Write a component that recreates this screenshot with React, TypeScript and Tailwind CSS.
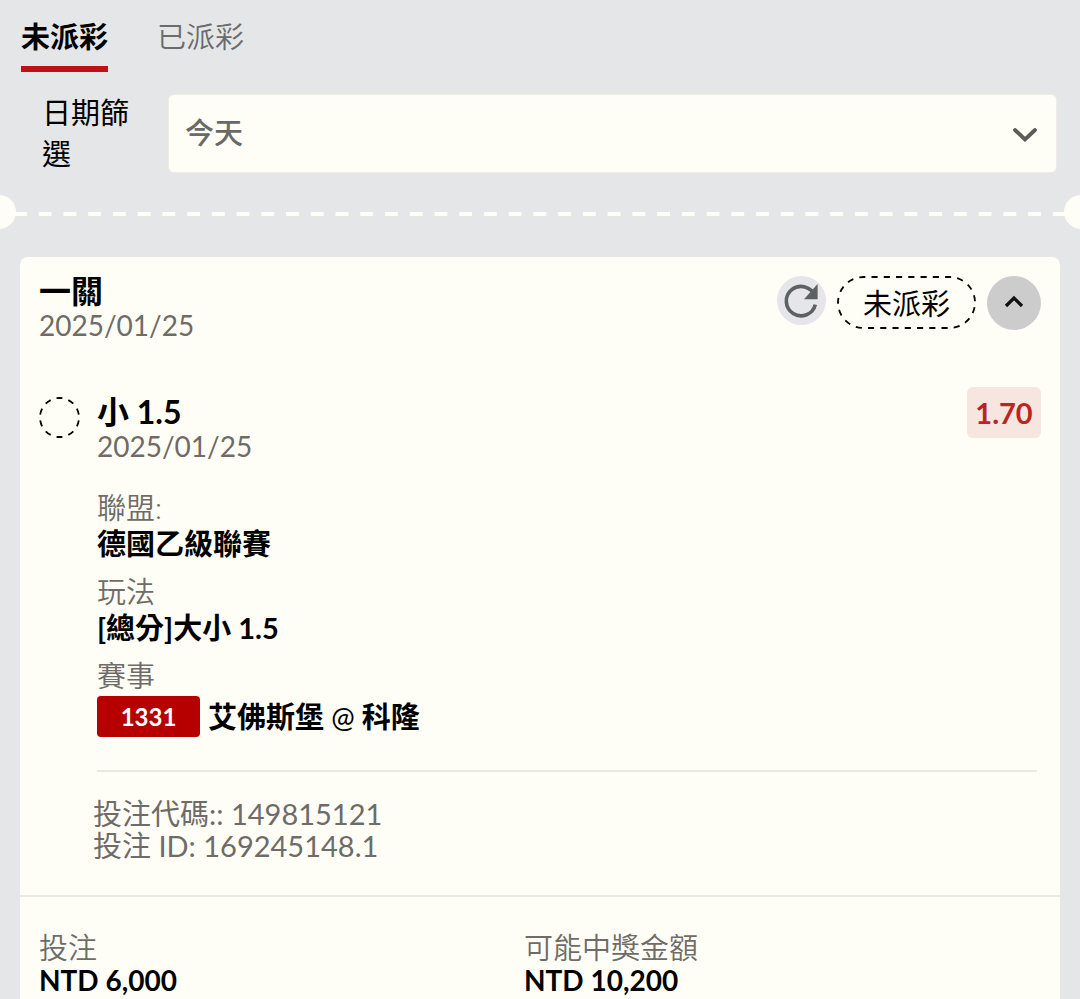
import { useState } from "react";
import clsx from "clsx";

const tabs = ["未派彩", "已派彩"];

const details = [
  { label: "聯盟:", value: "德國乙級聯賽" },
  { label: "玩法", value: "[總分]大小 1.5" },
];

const totals = [
  { label: "投注", value: "NTD 6,000" },
  { label: "可能中獎金額", value: "NTD 10,200" },
];

const ReloadIcon = () => (
  <svg viewBox="0 0 49 49" className="h-full w-full" aria-hidden="true">
    <path
      d="M38.3 28.6A14.7 14.7 0 1 1 37.8 20"
      fill="none"
      stroke="#5f6063"
      strokeWidth="3.6"
    />
    <path d="M40.6 8V23.2H27Z" fill="#5f6063" />
  </svg>
);

const PendingCircle = () => (
  <svg
    viewBox="0 0 41 41"
    className="mt-2.5 size-[41px] shrink-0"
    aria-hidden="true"
  >
    <circle
      cx="20.5"
      cy="20.5"
      r="19.5"
      pathLength="20"
      fill="none"
      stroke="#000"
      strokeWidth="1.8"
      strokeDasharray="1 1"
      strokeDashoffset="-0.5"
    />
  </svg>
);

const StatusPill = ({ children }: { children: string }) => (
  <span className="relative flex h-[53px] w-[139px] items-center justify-center pt-0.5 text-black">
    <svg
      viewBox="0 0 139 53"
      className="absolute inset-0 h-full w-full"
      aria-hidden="true"
    >
      <rect
        x="1"
        y="1"
        width="137"
        height="51"
        rx="25.5"
        pathLength="54"
        fill="none"
        stroke="#000"
        strokeWidth="1.8"
        strokeDasharray="1 1"
        strokeDashoffset="0.7"
      />
    </svg>
    {children}
  </span>
);

const Tabs = () => {
  const [active, setActive] = useState(0);
  return (
    <nav className="flex gap-[49px] px-[21px]">
      {tabs.map((tab, index) => (
        <button
          key={tab}
          type="button"
          onClick={() => setActive(index)}
          className={clsx(
            "h-[72px] border-b-6 pt-2",
            index === active
              ? "border-[#c01014] font-bold text-black"
              : "border-transparent font-[350] text-[#6b6b6b]"
          )}
        >
          {tab}
        </button>
      ))}
    </nav>
  );
};

const DateFilter = () => (
  <div className="mt-5 flex items-center gap-[38px] pl-[42px] pr-[23px]">
    <label htmlFor="date" className="w-22 shrink-0 leading-[41px] text-black">
      日期篩選
    </label>
    <div className="relative grow">
      <select
        id="date"
        className="block h-[79px] w-full appearance-none rounded-md border border-[#f0ede5] bg-[#fffef6] px-4 font-medium text-[#6b6965]"
      >
        <option>今天</option>
        <option>昨天</option>
      </select>
      <svg
        viewBox="0 0 24 14"
        className="pointer-events-none absolute right-5 top-[34px] h-3.5 w-6"
        aria-hidden="true"
      >
        <path
          d="M2 2L12 11.5L22 2"
          fill="none"
          stroke="#5c5c59"
          strokeWidth="3.8"
          strokeLinecap="round"
        />
      </svg>
    </div>
  </div>
);

const TicketDivider = () => (
  <div className="relative mt-[21px] flex h-[34px] items-center overflow-hidden pl-3.5 pr-0.5 pt-1">
    <div className="h-1 grow bg-[linear-gradient(90deg,#fffef6_50%,transparent_50%)] bg-[length:25px_4px] [background-repeat:round]" />
    <span className="absolute -left-[18px] top-0 size-[34px] rounded-full bg-[#fffef6]" />
    <span className="absolute -right-[18px] top-0 size-[34px] rounded-full bg-[#fffef6]" />
  </div>
);

const BetCard = () => (
  <article className="mx-5 mt-7 grow rounded-t-lg bg-[#fffef6] pt-4">
    <header className="flex items-start justify-between px-[19px]">
      <div>
        <h2 className="text-[32px] leading-9 font-bold text-black">一關</h2>
        <p className="text-[28px] leading-8">2025/01/25</p>
      </div>
      <div className="mt-[3px] flex items-start gap-[11px]">
        <button
          type="button"
          aria-label="重新整理"
          className="size-[49px] rounded-full bg-[#e5e5ea]"
        >
          <ReloadIcon />
        </button>
        <StatusPill>未派彩</StatusPill>
        <button
          type="button"
          aria-label="收合"
          className="size-[54px] rounded-full bg-[#cccccd]"
        >
          <svg viewBox="0 0 54 54" className="h-full w-full" aria-hidden="true">
            <path
              d="M19 30L27 22L35 30"
              fill="none"
              stroke="#111"
              strokeWidth="3.2"
            />
          </svg>
        </button>
      </div>
    </header>

    <section className="mt-[46px] flex items-start px-[19px]">
      <PendingCircle />
      <div className="ml-[17px] grow pt-[7px]">
        <h3 className="text-[32px] leading-9 font-bold text-black">小 1.5</h3>
        <p className="text-[28px] leading-8">2025/01/25</p>
      </div>
      <span className="flex h-[51px] w-[74px] items-center justify-center rounded-md bg-[#f7e5df] font-bold text-[#b9261f]">
        1.70
      </span>
    </section>

    <div className="mt-7 pl-[77px] pr-[23px]">
      <dl className="flex flex-col gap-3 leading-9">
        {details.map(({ label, value }) => (
          <div key={label}>
            <dt className="font-[350]">{label}</dt>
            <dd className="font-bold text-black">{value}</dd>
          </div>
        ))}
        <div>
          <dt className="font-[350]">賽事</dt>
          <dd className="mt-0.5 flex items-center gap-2 font-bold text-black">
            <span className="flex h-[41px] w-[103px] items-center justify-center rounded-sm bg-[#b60000] text-2xl text-white">
              1331
            </span>
            <span>
              艾佛斯堡
              <span className="text-[28px] font-normal">{" @ "}</span>
              科隆
            </span>
          </dd>
        </div>
      </dl>
      <hr className="mt-[33px] border-t-2 border-[#ebe8e3]" />
    </div>

    <div className="mt-[26px] px-[73px] pb-[33px] leading-8">
      <p>投注代碼:: 149815121</p>
      <p>投注 ID: 169245148.1</p>
    </div>

    <dl className="grid grid-cols-2 border-t-2 border-[#ebe8e3] pl-[19px] pr-[51px] pt-[35px] leading-8">
      {totals.map(({ label, value }) => (
        <div key={label}>
          <dt className="font-[350]">{label}</dt>
          <dd className="text-[28px] font-bold text-black">{value}</dd>
        </div>
      ))}
    </dl>
  </article>
);

export default function App() {
  return (
    <main
      lang="zh-Hant"
      className="flex min-h-screen flex-col bg-[#e5e6e8] font-[Lato,'Noto_Sans_CJK_TC',sans-serif] text-[29px] text-[#6e6b68]"
    >
      <Tabs />
      <DateFilter />
      <TicketDivider />
      <BetCard />
    </main>
  );
}
